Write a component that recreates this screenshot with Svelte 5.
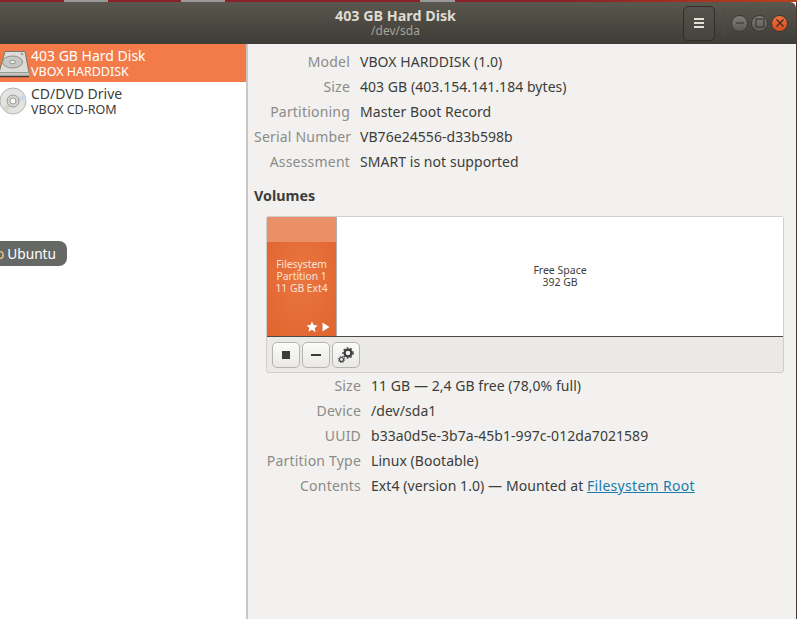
<script>
  const driveRows = [
    { label: 'Model', value: 'VBOX HARDDISK (1.0)' },
    { label: 'Size', value: '403 GB (403.154.141.184 bytes)' },
    { label: 'Partitioning', value: 'Master Boot Record' },
    { label: 'Serial Number', value: 'VB76e24556-d33b598b' },
    { label: 'Assessment', value: 'SMART is not supported' }
  ];
  const volumeRows = [
    { label: 'Size', value: '11 GB — 2,4 GB free (78,0% full)' },
    { label: 'Device', value: '/dev/sda1' },
    { label: 'UUID', value: 'b33a0d5e-3b7a-45b1-997c-012da7021589' },
    { label: 'Partition Type', value: 'Linux (Bootable)' }
  ];
</script>

<div class="desktop">
  <div class="strip">
    <span class="chip c1"></span><span class="chip c2"></span><span class="chip c3"></span>
  </div>
  <div class="window">
    <header class="titlebar">
      <div class="title">
        <div class="title-main">403 GB Hard Disk</div>
        <div class="title-sub">/dev/sda</div>
      </div>
      <div class="controls">
        <button class="menu-btn" aria-label="Menu">
          <span></span><span></span><span></span>
        </button>
        <div class="sep"></div>
        <div class="wm">
          <span class="wm-btn" aria-label="Minimize"><svg width="12" height="12" viewBox="0 0 12 12"><path d="M2 6h8" stroke="#3a3935" stroke-width="1.2"/></svg></span>
          <span class="wm-btn" aria-label="Maximize"><svg width="12" height="12" viewBox="0 0 12 12"><rect x="2" y="2" width="8" height="8" fill="none" stroke="#3a3935" stroke-width="1.2"/></svg></span>
          <span class="wm-btn close" aria-label="Close"><svg width="10" height="10" viewBox="0 0 10 10"><path d="M1.5 1.5l7 7M8.5 1.5l-7 7" stroke="#3a2a20" stroke-width="1.2"/></svg></span>
        </div>
      </div>
    </header>

    <div class="body">
      <aside class="sidebar">
        <div class="device selected">
          <svg class="dev-icon" width="30" height="30" viewBox="0 0 30 30">
            <path d="M5 3.500h20l4 21H-1z" fill="#dcdcd8" stroke="#77776f"/>
            <ellipse cx="12.500" cy="14" rx="10" ry="6" fill="#c8c8c4" stroke="#8f8f8a"/>
            <ellipse cx="12.500" cy="14" rx="3" ry="1.800" fill="#ecece8" stroke="#8f8f8a"/>
            <path d="M21 5l2 2" stroke="#8f8f8a" stroke-width="1.500"/>
            <rect x="-1" y="24.500" width="30" height="4" fill="#c4c4c0"/>
            <path d="M-1 28.500h30" stroke="#3d3d3a" stroke-width="1.500"/>
          </svg>
          <div class="dev-text">
            <div class="dev-name">403 GB Hard Disk</div>
            <div class="dev-model">VBOX HARDDISK</div>
          </div>
        </div>
        <div class="device">
          <svg class="dev-icon" width="30" height="30" viewBox="0 0 30 30">
            <circle cx="13" cy="15" r="13" fill="#e3e3e1" stroke="#b4b4b2"/>
            <path d="M13 15L24 8A13 13 0 0 1 26 15z" fill="#cfd8e4"/>
            <path d="M13 15L2 22A13 13 0 0 0 7 26.500z" fill="#d8d4cc"/>
            <circle cx="13" cy="15" r="6" fill="#d4d4d2" stroke="#9a9a98"/>
            <circle cx="13" cy="15" r="3" fill="#fff" stroke="#9a9a98"/>
          </svg>
          <div class="dev-text">
            <div class="dev-name">CD/DVD Drive</div>
            <div class="dev-model">VBOX CD-ROM</div>
          </div>
        </div>
        <div class="tooltip"><span class="tip-o">o</span> Ubuntu</div>
      </aside>

      <main class="content">
        <dl class="grid drive-grid">
          {#each driveRows as row}
            <dt>{row.label}</dt>
            <dd>{row.value}</dd>
          {/each}
        </dl>

        <h2 class="volumes">Volumes</h2>

        <div class="volume-box">
          <div class="map">
            <div class="part">
              <div class="part-top"></div>
              <div class="part-label">Filesystem<br />Partition 1<br />11 GB Ext4</div>
              <div class="part-icons">
                <svg width="12" height="12" viewBox="0 0 12 12"><path d="M6 .5l1.700 3.600 3.900.5-2.900 2.700.8 3.900L6 8.800l-3.500 1.900.8-3.900L.4 4.600l3.900-.5z" fill="#fff"/></svg>
                <svg width="8" height="10" viewBox="0 0 8 10"><path d="M.5 .5L7.500 5 .5 9.500z" fill="#fff"/></svg>
              </div>
            </div>
            <div class="free">Free Space<br />392 GB</div>
          </div>
          <div class="toolbar">
            <button class="tool" aria-label="Stop"><span class="stop"></span></button>
            <button class="tool" aria-label="Remove"><span class="minus"></span></button>
            <button class="tool" aria-label="Settings">
              <svg width="18" height="18" viewBox="0 0 18 18">
                <circle cx="11" cy="7" r="3.400" fill="none" stroke="#3c3c3c" stroke-width="2.200"/>
                <circle cx="11" cy="7" r="5" fill="none" stroke="#3c3c3c" stroke-width="1.400" stroke-dasharray="1.800 1.800"/>
                <circle cx="4.500" cy="13.500" r="2" fill="none" stroke="#3c3c3c" stroke-width="1.100"/>
                <circle cx="4.500" cy="13.500" r="3.200" fill="none" stroke="#3c3c3c" stroke-width="1" stroke-dasharray="1.200 1.300"/>
              </svg>
            </button>
          </div>
        </div>

        <dl class="grid volume-grid">
          {#each volumeRows as row}
            <dt>{row.label}</dt>
            <dd>{row.value}</dd>
          {/each}
          <dt>Contents</dt>
          <dd class="contents">Ext4 (version 1.0) — Mounted at <a href="#root">Filesystem Root</a></dd>
        </dl>
      </main>
    </div>
  </div>
</div>

<style>
  :global(body) {
    margin: 0;
    background: #fff;
  }

  .desktop {
    width: 797px;
    height: 619px;
    overflow: hidden;
    background: #4a3a36;
    font-family: "Noto Sans", "Open Sans", sans-serif;
    font-size: 14px;
    color: #3d3d3a;
    display: flex;
    flex-direction: column;
  }

  .strip {
    height: 2px;
    flex: none;
    position: relative;
    background: linear-gradient(to right, #8a2029 70%, #b8401c);
  }

  .chip {
    position: absolute;
    top: 0;
    height: 2px;
    background: #9a9a98;
  }

  .c1 { left: 64px; width: 44px; }
  .c2 { left: 181px; width: 44px; }
  .c3 { left: 420px; width: 35px; }

  .window {
    flex: 1;
    margin-right: 1px;
    display: flex;
    flex-direction: column;
    min-height: 0;
    background: #f2f1ef;
  }

  .titlebar {
    height: 42px;
    flex: none;
    background: linear-gradient(#5a574e, #3d3c36);
    border-top-right-radius: 6px;
    position: relative;
    display: flex;
    justify-content: flex-end;
    align-items: center;
  }

  .title {
    position: absolute;
    left: 0;
    right: 5px;
    top: 6px;
    text-align: center;
    color: #dfdbd2;
  }

  .title-main {
    font-size: 14.300px;
    font-weight: 700;
    line-height: 16px;
  }

  .title-sub {
    font-size: 12px;
    line-height: 14px;
    color: #a5a39a;
  }

  .controls {
    display: flex;
    align-items: center;
    position: relative;
    padding-right: 8px;
  }

  .menu-btn {
    width: 32px;
    height: 35px;
    padding: 0;
    border: 1px solid #2f2e2a;
    border-radius: 5px;
    background: linear-gradient(#54524a, #45443e);
    display: flex;
    flex-direction: column;
    align-items: center;
    justify-content: center;
    gap: 2px;
  }

  .menu-btn span {
    width: 10px;
    height: 2px;
    background: #e4e0d8;
  }

  .sep {
    width: 1px;
    height: 28px;
    margin: 0 6px 0 9px;
    background: #4a4942;
  }

  .wm {
    display: flex;
    gap: 3px;
  }

  .wm-btn {
    width: 17px;
    height: 17px;
    box-sizing: border-box;
    border-radius: 50%;
    border: 1px solid #3a3935;
    background: linear-gradient(#7d7c76, #5c5b55);
    display: flex;
    align-items: center;
    justify-content: center;
  }

  .close {
    background: linear-gradient(#f0703f, #d44e1e);
  }

  .body {
    flex: 1;
    display: flex;
    min-height: 0;
  }

  .sidebar {
    width: 246px;
    flex: none;
    background: #fff;
    border-right: 2px solid #c9c8c5;
    position: relative;
  }

  .device {
    height: 38px;
    display: flex;
    align-items: center;
    box-sizing: border-box;
  }

  .selected {
    background: #f37b49;
    color: #fff;
  }

  .dev-icon {
    flex: none;
    width: 30px;
    overflow: visible;
    margin-right: 1px;
  }

  .dev-text {
    line-height: 16px;
  }

  .dev-name {
    font-size: 14px;
  }

  .dev-model {
    font-size: 12.500px;
    line-height: 15px;
  }

  .tooltip {
    position: absolute;
    left: -18px;
    top: 197px;
    height: 25px;
    padding: 0 11px 0 14px;
    display: flex;
    align-items: center;
    gap: 3px;
    border-radius: 8px;
    background: #666866;
    color: #fff;
    font-size: 13.700px;
  }

  .tip-o {
    color: #f7c98a;
  }

  .content {
    flex: 1;
    min-width: 0;
    padding: 5px 12px 0 6px;
  }

  .grid {
    margin: 0;
    display: grid;
    grid-auto-rows: 25px;
    align-items: center;
    column-gap: 10px;
  }

  .drive-grid {
    grid-template-columns: 96px 1fr;
  }

  .volume-grid {
    grid-template-columns: 107px 1fr;
  }

  dt {
    text-align: right;
    color: #8b8b88;
    white-space: nowrap;
    letter-spacing: 0.200px;
  }

  dd {
    margin: 0;
    white-space: nowrap;
    letter-spacing: 0.050px;
  }

  .contents {
    letter-spacing: 0.080px;
  }

  a {
    color: #1a7ba8;
    text-decoration: underline;
    letter-spacing: 0.300px;
  }

  .volumes {
    margin: 13px 0 0;
    font-size: 14.300px;
    font-weight: 700;
    line-height: 18px;
  }

  .volume-box {
    margin: 11px 0 0 12px;
    width: 518px;
    border: 1px solid #d0cfcc;
    border-radius: 3px;
    background: #eae9e6;
    box-sizing: border-box;
  }

  .map {
    height: 119px;
    display: flex;
    background: #fff;
    border-bottom: 1px solid #4a4a48;
  }

  .part {
    width: 70px;
    flex: none;
    position: relative;
    box-sizing: border-box;
    background: radial-gradient(ellipse at center, #ea7440, #e0652e);
    border-right: 1px solid #b0afac;
    color: #fbe3d6;
    text-align: center;
    font-size: 10.300px;
    line-height: 12px;
  }

  .part-top {
    height: 25px;
    background: #ea8f68;
    margin-bottom: 16px;
  }

  .part-icons {
    position: absolute;
    right: 6px;
    bottom: 3px;
    display: flex;
    align-items: center;
    gap: 4px;
  }

  .free {
    flex: 1;
    text-align: center;
    font-size: 10.500px;
    line-height: 12px;
    padding-top: 47px;
  }

  .toolbar {
    height: 35px;
    padding: 0 5px;
    box-sizing: border-box;
    display: flex;
    gap: 2px;
    align-items: center;
  }

  .tool {
    width: 28px;
    height: 26px;
    padding: 0;
    border: 1px solid #b5b4b0;
    border-radius: 5px;
    background: linear-gradient(#fbfbfa, #e9e8e5);
    display: flex;
    align-items: center;
    justify-content: center;
  }

  .stop {
    width: 8px;
    height: 8px;
    background: #3c3c3c;
  }

  .minus {
    width: 10px;
    height: 2px;
    background: #3c3c3c;
  }
</style>
